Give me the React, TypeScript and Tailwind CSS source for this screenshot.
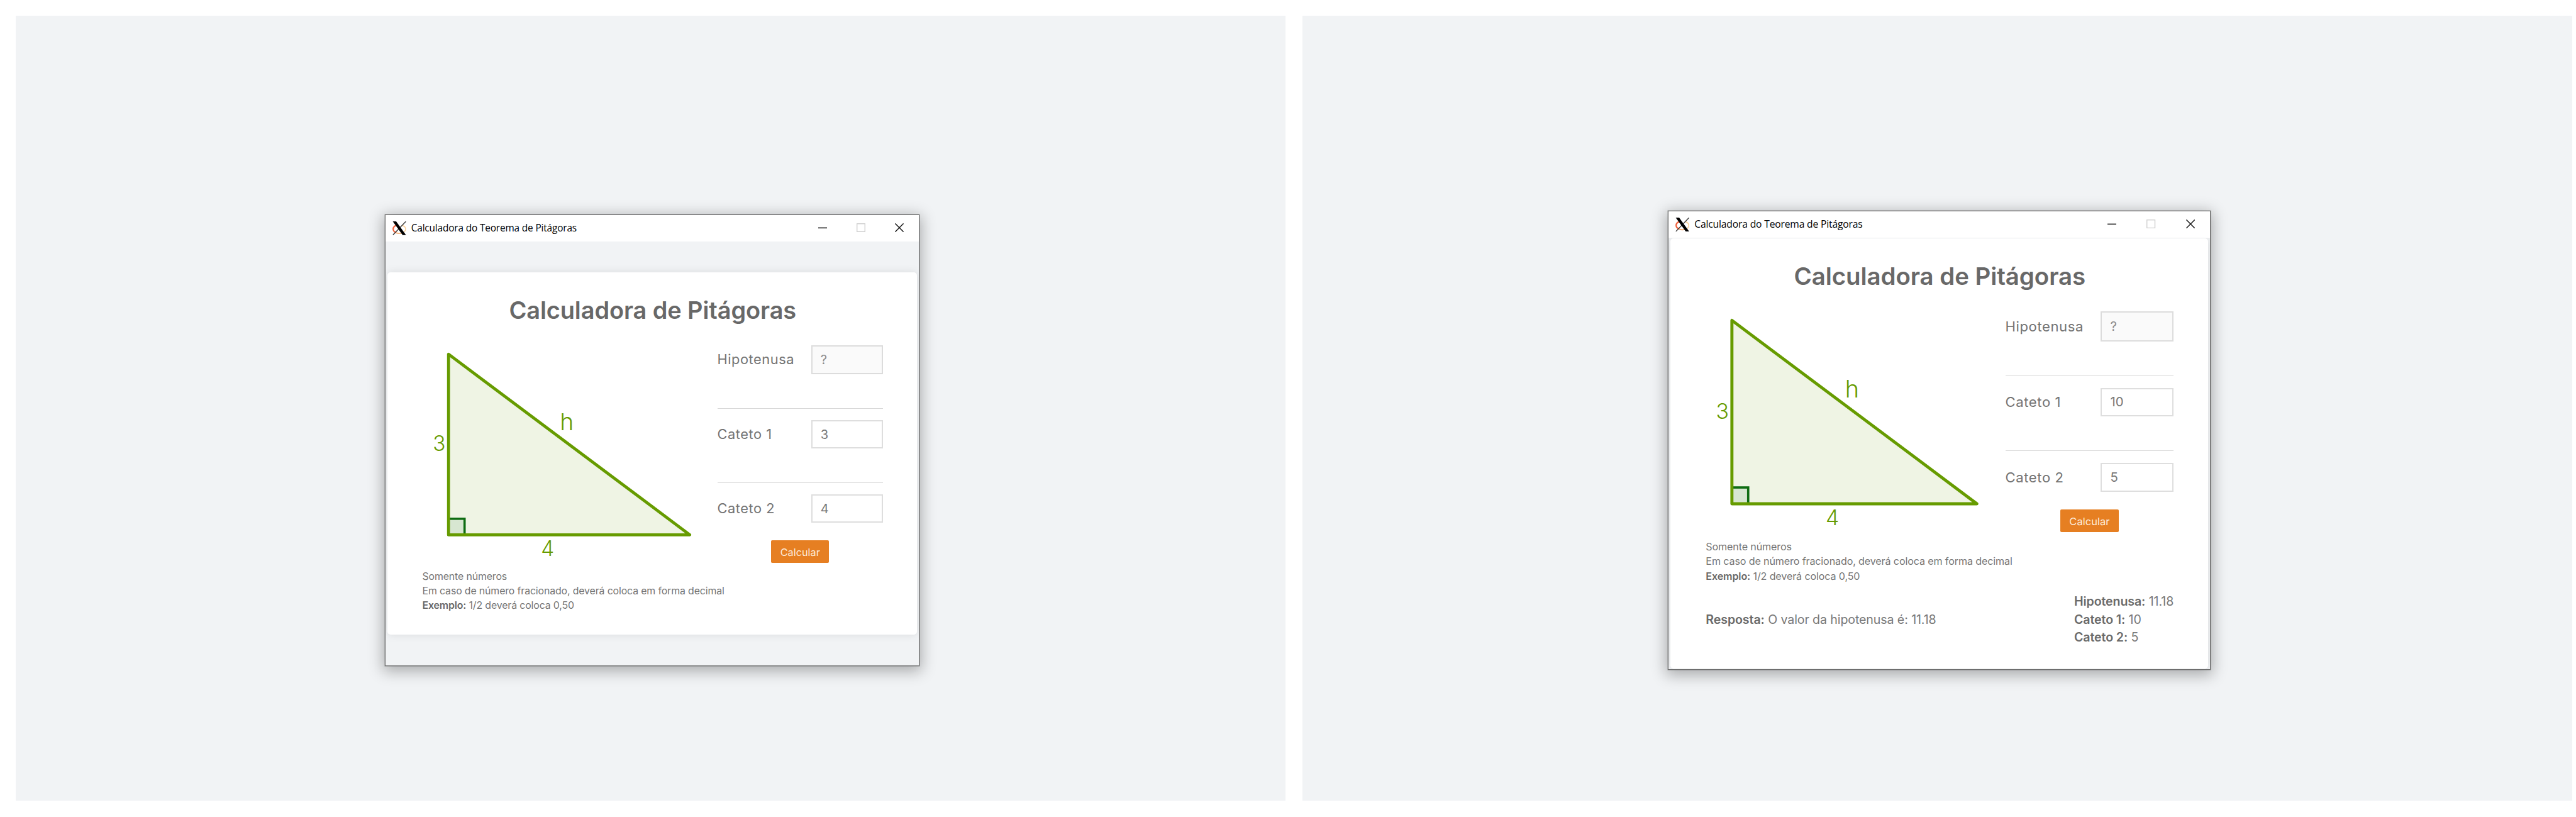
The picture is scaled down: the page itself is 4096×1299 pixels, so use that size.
import React from "react";

type CalculatorProps = {
  hypotenuse: string;
  leg1: string;
  leg2: string;
  children?: React.ReactNode;
};

function XLogo() {
  return (
    <svg viewBox="0 0 22 22" className="h-[2.2em] w-[2.2em] shrink-0" fill="none">
      <path d="M8 5.500C4 6.500 1.200 9 1.200 12.200c0 2.500 2 4.600 5 5.600" stroke="#f0603a" strokeWidth="2.200" />
      <path d="M6 18.200c3 1 7 1 10 0" stroke="#f6a765" strokeWidth="1.600" />
      <path d="M15 6.200c3.500 1 6 3.200 6 6 0 2.500-2 4.700-5 5.800" stroke="#fbcf97" strokeWidth="1.500" />
      <path d="M21.400 0 0.800 21.600" stroke="#3a3a3a" strokeWidth="1.400" />
      <path d="M0.500 0h5.400L21.600 21.800h-5.400z" fill="#000" />
    </svg>
  );
}

function TitleBar() {
  return (
    <div className="flex h-[4.15em] shrink-0 items-center bg-white pl-[1.1em]">
      <XLogo />
      <span className="ml-[0.5em] grow font-['Open_Sans','Noto_Sans',sans-serif] text-[1.54em] leading-none tracking-[-0.010em] whitespace-nowrap text-black">
        Calculadora do Teorema de Pitágoras
      </span>
      <div className="flex pb-[0.15em]">
        <span className="flex w-[6.14em] items-center justify-center">
          <svg viewBox="0 0 14 14" className="h-[1.4em] w-[1.4em]">
            <path d="M0 7.300h14" stroke="#444" strokeWidth="1.800" />
          </svg>
        </span>
        <span className="flex w-[6.14em] items-center justify-center">
          <svg viewBox="0 0 14 14" className="h-[1.4em] w-[1.4em]" fill="none">
            <rect x="0.700" y="0.700" width="12.600" height="12.600" stroke="#cfcfcf" strokeWidth="1.400" />
          </svg>
        </span>
        <span className="flex w-[6.14em] items-center justify-center">
          <svg viewBox="0 0 14 14" className="h-[1.4em] w-[1.4em]">
            <path d="M0.400 0.400 13.600 13.600M13.600 0.400 0.400 13.600" stroke="#1a1a1a" strokeWidth="1.500" />
          </svg>
        </span>
      </div>
    </div>
  );
}

function Triangle() {
  return (
    <svg viewBox="0 0 439 345.500" className="h-[34.55em] w-[43.9em] shrink-0 overflow-visible">
      <path d="M41.200 14.200V301.300H424.800Z" fill="#eff4e4" />
      <rect x="41.200" y="275.800" width="25.500" height="25.500" fill="#d7e6d1" stroke="#0e6c12" strokeWidth="3.600" />
      <path
        d="M41.200 14.200V301.300H424.800Z"
        fill="none"
        stroke="#669b00"
        strokeWidth="4.800"
        strokeLinejoin="round"
      />
      <g fill="#669b00" className="font-[350]">
        <text x="16.200" y="168.400" fontSize="33.300">3</text>
        <text x="188.200" y="334.800" fontSize="33.300">4</text>
        <text x="218.300" y="135.300" fontSize="37.300">h</text>
      </g>
    </svg>
  );
}

function Field({ label, value, disabled = false }: { label: string; value: string; disabled?: boolean }) {
  return (
    <label className="flex items-center justify-between">
      <span className="text-[2.18em] leading-none tracking-[0.025em] whitespace-nowrap text-[#747474]">{label}</span>
      {disabled ? (
        <span className="flex h-[4.64em] w-[11.42em] items-center border-2 border-[#dcdcdc] bg-[#fafafa] pl-[1.3em]">
          <span className="text-[2em] leading-none text-[#8c8c8c]">{value}</span>
        </span>
      ) : (
        <span className="flex h-[4.5em] w-[11.42em] items-center border-2 border-[#dedede] bg-white pl-[1.3em]">
          <span className="text-[2em] leading-none text-[#777777]">{value}</span>
        </span>
      )}
    </label>
  );
}

function Divider() {
  return <div className="mt-[5.32em] mb-[1.88em] h-px bg-[#d9d9d9]" />;
}

function Calculator({ hypotenuse, leg1, leg2, children }: CalculatorProps) {
  return (
    <div className="flex grow flex-col pr-[5.4em] pl-[5.55em]">
      <h1 className="flex h-[4.1em] items-center justify-center">
        <span className="text-[3.79em] leading-none font-semibold tracking-[-0.002em] whitespace-nowrap text-[#686868]">
          Calculadora de Pitágoras
        </span>
      </h1>
      <div className="mt-[3.45em] flex items-start justify-between">
        <Triangle />
        <div className="flex w-[26.35em] flex-col">
          <Field label="Hipotenusa" value={hypotenuse} disabled />
          <Divider />
          <Field label="Cateto 1" value={leg1} />
          <Divider />
          <Field label="Cateto 2" value={leg2} />
          <button className="mt-[2.74em] flex h-[3.6em] w-[9.2em] items-center justify-center self-center rounded-[2px] bg-[#e67f22] pt-[0.2em]">
            <span className="text-[1.63em] leading-none text-[#fdebda]">Calcular</span>
          </button>
        </div>
      </div>
      <div className="mt-[1.1em] flex flex-col whitespace-nowrap text-[#757575]">
        <p className="flex h-[2.29em] items-center">
          <span className="text-[1.59em] leading-none tracking-[-0.009em]">Somente números</span>
        </p>
        <p className="flex h-[2.29em] items-center">
          <span className="text-[1.59em] leading-none tracking-[-0.009em]">
            Em caso de número fracionado, deverá coloca em forma decimal
          </span>
        </p>
        <p className="flex h-[2.29em] items-center">
          <span className="text-[1.59em] leading-none tracking-[-0.009em]">
            <b className="font-semibold text-[#686868]">Exemplo:</b> 1/2 deverá coloca 0,50
          </span>
        </p>
      </div>
      {children}
    </div>
  );
}

function ResultLine({ label, value }: { label: string; value: string }) {
  return (
    <p className="flex h-[2.81em] items-center">
      <span className="text-[1.93em] leading-none tracking-[-0.005em] whitespace-nowrap">
        <b className="font-semibold text-[#6a6a6a]">{label}</b> {value}
      </span>
    </p>
  );
}

export default function App() {
  return (
    <div className="flex h-[1299px] w-[4096px] gap-[27px] overflow-hidden bg-white pt-[25px] pl-[25px] font-[Inter,sans-serif]">
      <section className="h-[1248px] w-[2019px] shrink-0 bg-[#f1f3f5] pt-[316px] pl-[587px]">
        <div className="flex h-[718px] w-[850px] flex-col border border-[#6c6c6c] bg-[#f1f3f5] text-[10px] shadow-[0_5px_22px_3px_rgba(0,0,0,0.3),0_0_0_0.5px_rgba(0,0,0,0.35)]">
          <TitleBar />
          <div className="flex grow flex-col overflow-hidden px-[3px] pt-[49px] pb-[49px]">
            <div className="flex grow flex-col rounded-[5px] bg-white pt-[4.1em] shadow-[0_0_14px_rgba(0,0,0,0.1)]">
              <Calculator hypotenuse="?" leg1="3" leg2="4" />
            </div>
          </div>
        </div>
      </section>
      <section className="h-[1248px] w-[2019px] shrink-0 bg-[#f1f3f5] pt-[310px] pl-[581px]">
        <div className="flex h-[730px] w-[863px] flex-col border border-[#6c6c6c] bg-[#f1f3f5] text-[10.155px] shadow-[0_5px_22px_3px_rgba(0,0,0,0.3),0_0_0_0.5px_rgba(0,0,0,0.35)]">
          <TitleBar />
          <div className="flex grow flex-col overflow-hidden px-[3px] pt-px pb-px">
            <div className="flex grow flex-col rounded-[5px] bg-white pt-[3.9em] shadow-[0_0_14px_rgba(0,0,0,0.1)]">
              <Calculator hypotenuse="?" leg1="10" leg2="5">
                <div className="mt-[1.5em] flex items-center justify-between text-[#787878]">
                  <ResultLine label="Resposta:" value="O valor da hipotenusa é: 11.18" />
                  <div className="flex flex-col">
                    <ResultLine label="Hipotenusa:" value="11.18" />
                    <ResultLine label="Cateto 1:" value="10" />
                    <ResultLine label="Cateto 2:" value="5" />
                  </div>
                </div>
              </Calculator>
            </div>
          </div>
        </div>
      </section>
    </div>
  );
}
